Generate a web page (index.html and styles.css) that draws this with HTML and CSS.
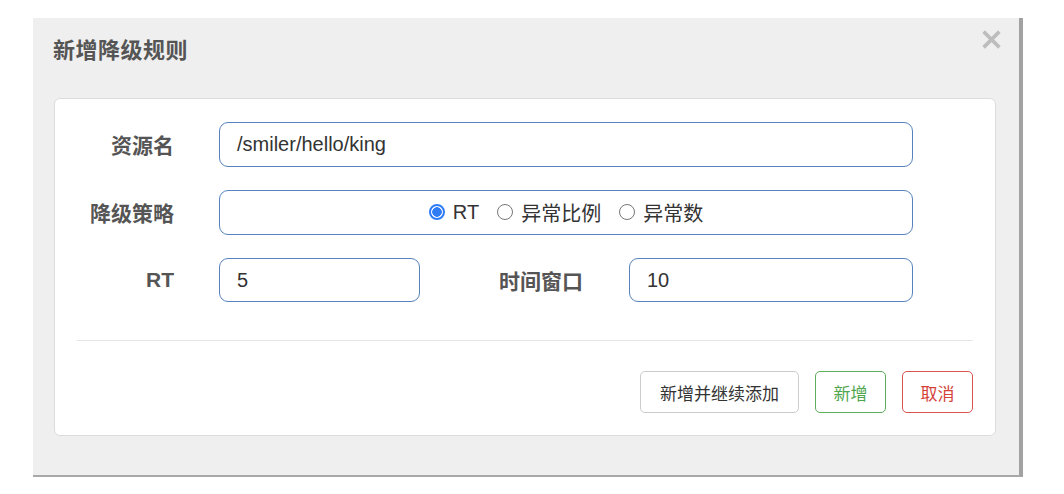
FILE: index.html
```html
<!DOCTYPE html>
<html lang="zh">
<head>
<meta charset="utf-8">
<link rel="stylesheet" href="styles.css">
</head>
<body>
<div class="dialog">
  <div class="dialog-header">
    <h3 class="dialog-title">新增降级规则</h3>
    <button class="close" aria-label="close">
      <svg width="21" height="21" viewBox="0 0 20 20"><path d="M2.5 2.5 L17.5 17.5 M17.5 2.5 L2.5 17.5" stroke="#bdbdbd" stroke-width="3.4" stroke-linecap="butt"/></svg>
    </button>
  </div>
  <div class="card">
    <div class="row">
      <label class="label">资源名</label>
      <div class="input wide">/smiler/hello/king</div>
    </div>
    <div class="row">
      <label class="label">降级策略</label>
      <div class="input wide radios">
        <span class="radio checked"></span><span class="rtext">RT</span>
        <span class="radio"></span><span class="rtext">异常比例</span>
        <span class="radio"></span><span class="rtext">异常数</span>
      </div>
    </div>
    <div class="row">
      <label class="label">RT</label>
      <div class="input short">5</div>
      <label class="label label2">时间窗口</label>
      <div class="input mid">10</div>
    </div>
    <div class="divider"></div>
    <div class="actions">
      <button class="btn btn-default">新增并继续添加</button>
      <button class="btn btn-success">新增</button>
      <button class="btn btn-danger">取消</button>
    </div>
  </div>
</div>
</body>
</html>
```

FILE: styles.css
```css
html, body {
  margin: 0;
  padding: 0;
  background: #ffffff;
}
body {
  padding: 18px 0 0 33px;
  font-family: "Liberation Sans", "Noto Sans CJK SC", sans-serif;
}
.dialog {
  box-sizing: border-box;
  width: 990px;
  height: 459px;
  background: #efefef;
  border-right: 4px solid #a2a2a2;
  border-bottom: 2px solid #a8a8a8;
  padding: 0 23px 0 21px;
}
.dialog-header {
  height: 80px;
  display: flex;
  justify-content: space-between;
  align-items: flex-start;
}
.dialog-title {
  margin: 22px 0 0 -1px;
  font-size: 22px;
  line-height: 22px;
  font-weight: bold;
  color: #555555;
  letter-spacing: 0.5px;
}
.close {
  margin: 11px -6px 0 0;
  padding: 0;
  border: 0;
  background: transparent;
  width: 21px;
  height: 21px;
  display: flex;
}
.card {
  box-sizing: border-box;
  width: 942px;
  height: 338px;
  background: #ffffff;
  border: 1px solid #dcdcdc;
  border-radius: 6px;
  padding: 23px 22px 22px 22px;
}
.row {
  display: flex;
  align-items: center;
  height: 44px;
  margin-bottom: 24px;
}
.label {
  width: 97px;
  margin-right: 45px;
  text-align: right;
  font-size: 21px;
  font-weight: bold;
  color: #555555;
}
.label2 {
  width: 163px;
  margin-right: 46px;
}
.input {
  box-sizing: border-box;
  height: 44px;
  border: 1.5px solid #5683bd;
  border-radius: 9px;
  padding: 0 17px;
  display: flex;
  align-items: center;
  font-size: 20px;
  color: #333333;
}
.wide { width: 694px; height: 45px; }
.short { width: 201px; }
.mid { width: 284px; }
.radios {
  justify-content: center;
  font-size: 20px;
}
.radio {
  box-sizing: border-box;
  width: 16px;
  height: 16px;
  border-radius: 50%;
  border: 1px solid #777777;
  margin-right: 8px;
  margin-left: 18px;
  background: #fff;
}
.radio:first-child { margin-left: 0; }
.radio.checked {
  border: 2px solid #2f7cf5;
  background: radial-gradient(circle, #2f7cf5 0 4.5px, #ffffff 5px);
}
.rtext { color: #333333; }
.divider {
  height: 1px;
  background: #e6e6e6;
  margin: 38px 0 30px 0;
}
.actions {
  display: flex;
  justify-content: flex-end;
  gap: 16px;
}
.btn {
  box-sizing: border-box;
  height: 42px;
  border-radius: 5px;
  background: #ffffff;
  font-family: "Liberation Sans", "Noto Sans CJK SC", sans-serif;
  font-size: 17px;
  padding: 0;
}
.btn-default {
  width: 159px;
  border: 1px solid #cccccc;
  color: #333333;
}
.btn-success {
  width: 71px;
  border: 1px solid #5cae5c;
  color: #4fa64f;
}
.btn-danger {
  width: 71px;
  border: 1px solid #d9534f;
  color: #d43f3a;
}
```
